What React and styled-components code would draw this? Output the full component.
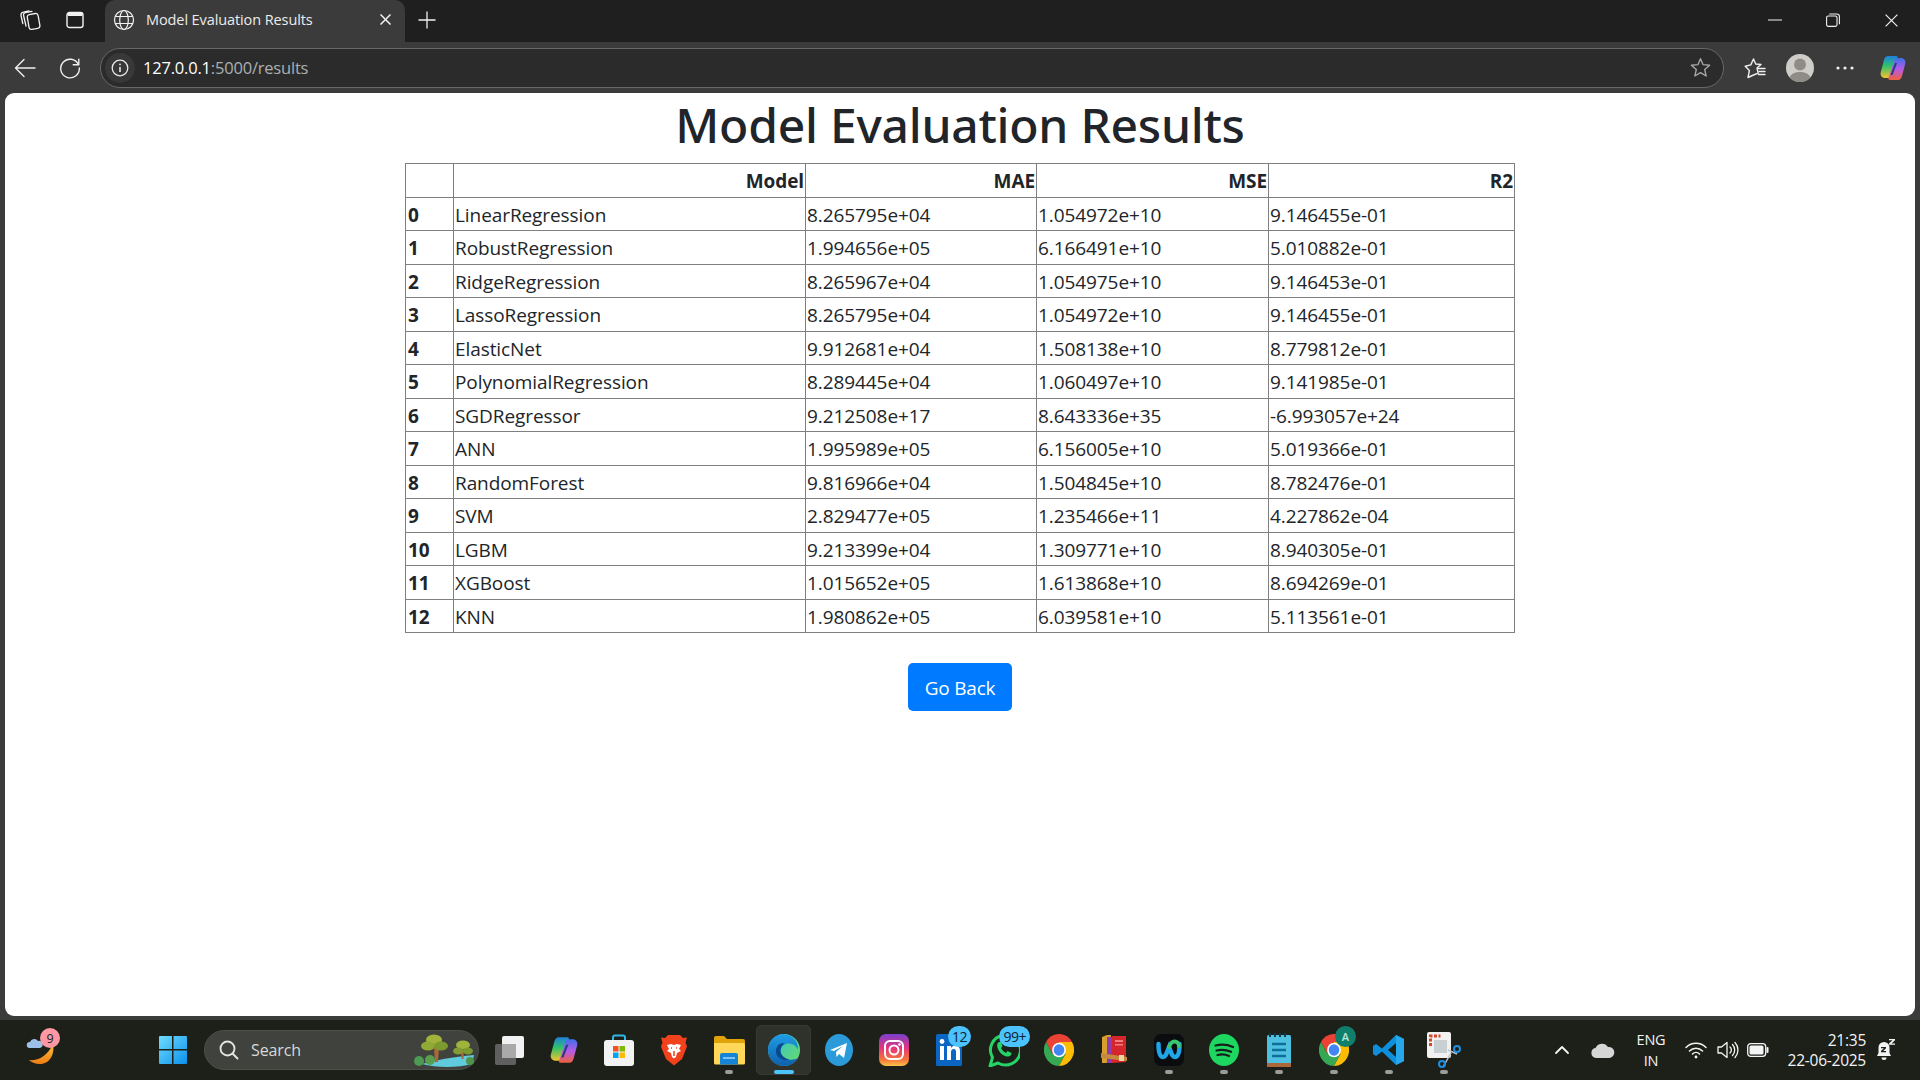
import React from 'react'
import styled, { createGlobalStyle } from 'styled-components'

const UI_FONT = '"Open Sans", "Noto Sans", sans-serif'

const GlobalStyle = createGlobalStyle`
  html, body {
    margin: 0;
    padding: 0;
    background: #3b3b3b;
    overflow: hidden;
  }
  * { box-sizing: border-box; }
`

const results = [
  ['LinearRegression', '8.265795e+04', '1.054972e+10', '9.146455e-01'],
  ['RobustRegression', '1.994656e+05', '6.166491e+10', '5.010882e-01'],
  ['RidgeRegression', '8.265967e+04', '1.054975e+10', '9.146453e-01'],
  ['LassoRegression', '8.265795e+04', '1.054972e+10', '9.146455e-01'],
  ['ElasticNet', '9.912681e+04', '1.508138e+10', '8.779812e-01'],
  ['PolynomialRegression', '8.289445e+04', '1.060497e+10', '9.141985e-01'],
  ['SGDRegressor', '9.212508e+17', '8.643336e+35', '-6.993057e+24'],
  ['ANN', '1.995989e+05', '6.156005e+10', '5.019366e-01'],
  ['RandomForest', '9.816966e+04', '1.504845e+10', '8.782476e-01'],
  ['SVM', '2.829477e+05', '1.235466e+11', '4.227862e-04'],
  ['LGBM', '9.213399e+04', '1.309771e+10', '8.940305e-01'],
  ['XGBoost', '1.015652e+05', '1.613868e+10', '8.694269e-01'],
  ['KNN', '1.980862e+05', '6.039581e+10', '5.113561e-01'],
]

const Frame = styled.div`
  width: 1920px;
  height: 1080px;
  display: flex;
  flex-direction: column;
  font-family: ${UI_FONT};
`

const TabBar = styled.div`
  height: 42px;
  flex: none;
  background: #1f1f1f;
  display: flex;
  align-items: stretch;
  color: #f2f2f2;
`

const TabBarButton = styled.div`
  width: ${p => p.$w}px;
  display: flex;
  align-items: center;
  justify-content: center;
  padding-bottom: 2px;
`

const Tab = styled.div`
  width: 300px;
  background: #3b3b3b;
  border-radius: 10px 10px 0 0;
  display: flex;
  align-items: center;
  padding: 0 14px 3px 8px;
  margin-left: 15px;
`

const TabTitle = styled.div`
  font-size: 14.5px;
  margin-left: 11px;
  flex: 1;
  color: #ececec;
  letter-spacing: -0.1px;
`

const WindowControls = styled.div`
  margin-left: auto;
  display: flex;
`

const WindowButton = styled.div`
  width: 58px;
  display: flex;
  justify-content: center;
  align-items: center;
  height: 40px;
`

const Toolbar = styled.div`
  height: 51px;
  flex: none;
  background: #3b3b3b;
  display: flex;
  align-items: center;
  color: #efefef;
`

const NavButton = styled.div`
  width: ${p => p.$w || 45}px;
  display: flex;
  justify-content: center;
  align-items: center;
`

const AddressBar = styled.div`
  width: 1624px;
  height: 40px;
  margin-left: 10px;
  border: 1px solid #686868;
  border-radius: 20px;
  background: #2b2b2b;
  display: flex;
  align-items: center;
  padding: 0 12px 0 4px;
`

const InfoBadge = styled.div`
  width: 30px;
  height: 30px;
  border-radius: 50%;
  background: #383838;
  display: flex;
  align-items: center;
  justify-content: center;
`

const Url = styled.div`
  margin-left: 8px;
  flex: 1;
  font-size: 16.5px;
  color: #a9b0b3;
  letter-spacing: -0.2px;
  span { color: #fff; }
`

const ToolbarEnd = styled.div`
  display: flex;
  align-items: center;
  margin-left: 8px;
`

const PageWrap = styled.div`
  flex: 1;
  min-height: 0;
  padding: 0 5px 4px;
`

const Page = styled.main`
  height: 100%;
  background: #fff;
  border-radius: 9px;
  display: flex;
  flex-direction: column;
  align-items: center;
`

const Heading = styled.h1`
  margin: 0;
  height: 70px;
  font-family: "Noto Sans", "Open Sans", sans-serif;
  font-size: 48px;
  line-height: 64px;
  font-weight: 500;
  color: #212529;
  letter-spacing: -0.25px;
`

const Table = styled.table`
  width: 1109px;
  border-collapse: collapse;
  table-layout: fixed;
  font-size: 19px;
  color: #212529;
  letter-spacing: -0.08px;
  th, td {
    border: 1px solid #808080;
    padding: 2px 1px 0 1px;
    height: 33.5px;
    line-height: 24px;
  }
`

const HeadCell = styled.th`
  width: ${p => p.$w}px;
  text-align: right;
  font-weight: 700;
`

const IndexCell = styled.th`
  text-align: left;
  font-weight: 700;
  padding-left: 2px !important;
`

const BackButton = styled.a`
  margin-top: 30px;
  width: 104px;
  height: 48px;
  padding-top: 2px;
  background: #007bff;
  border-radius: 5px;
  color: #fff;
  font-size: 19px;
  letter-spacing: -0.2px;
  display: flex;
  align-items: center;
  justify-content: center;
  text-decoration: none;
`

const Taskbar = styled.footer`
  height: 60px;
  flex: none;
  background: #1c2019;
  display: flex;
  align-items: center;
  color: #f4f4f4;
  position: relative;
`

const WeatherSlot = styled.div`
  width: 145px;
  padding: 0 0 0 26px;
  position: relative;
  display: flex;
  align-items: center;
  height: 60px;
`

const WeatherBadge = styled.div`
  position: absolute;
  left: 40px;
  top: 8px;
  width: 20px;
  height: 20px;
  border-radius: 50%;
  background: #ff98a4;
  color: #1b1b1b;
  font-size: 12.5px;
  display: flex;
  align-items: center;
  justify-content: center;
`

const Slot = styled.div`
  width: 55px;
  height: 50px;
  flex: none;
  position: relative;
  display: flex;
  align-items: center;
  justify-content: center;
  border-radius: 5px;
  background: ${p => (p.$active ? '#2e322b' : 'transparent')};
  border: 1px solid ${p => (p.$active ? '#363a33' : 'transparent')};
`

const RunDot = styled.div`
  position: absolute;
  bottom: 0;
  left: 50%;
  transform: translateX(-50%);
  width: ${p => (p.$active ? 20 : 8)}px;
  height: 4px;
  border-radius: 2px;
  background: ${p => (p.$active ? '#4cc2ff' : '#9b9b9b')};
`

const CountBadge = styled.div`
  position: absolute;
  top: 0;
  right: ${p => p.$right}px;
  height: 21px;
  min-width: 22px;
  padding: 0 4px;
  border-radius: 11px;
  background: #4cc2ff;
  color: #10222c;
  font-size: 14px;
  letter-spacing: -0.5px;
  display: flex;
  align-items: center;
  justify-content: center;
`

const SearchPill = styled.div`
  width: 275px;
  height: 40px;
  margin: 0 2px 0 4px;
  flex: none;
  border-radius: 20px;
  background: #3f423d;
  border: 1px solid #4b4e49;
  display: flex;
  align-items: center;
  padding-left: 14px;
  position: relative;
  font-size: 16px;
  color: #d8d8d8;
`

const SearchLabel = styled.span`
  margin-left: 12px;
  letter-spacing: -0.1px;
`

const SearchArt = styled.div`
  position: absolute;
  right: 2px;
  top: 3px;
`

const Tray = styled.div`
  margin-left: auto;
  display: flex;
  align-items: center;
  padding-right: 16px;
`

const TrayItem = styled.div`
  width: ${p => p.$w}px;
  display: flex;
  align-items: center;
  justify-content: center;
`

const LangBlock = styled.div`
  width: 54px;
  font-size: 14.5px;
  line-height: 21px;
  text-align: center;
  letter-spacing: -0.2px;
`

const Clock = styled.div`
  width: 95px;
  padding-right: 2px;
  font-size: 15.5px;
  line-height: 20px;
  text-align: right;
  letter-spacing: -0.25px;
  white-space: nowrap;
`

const stroke = { fill: 'none', stroke: 'currentColor', strokeLinecap: 'round', strokeLinejoin: 'round' }

const WorkspacesIcon = () => (
  <svg width="22" height="22" viewBox="0 0 22 22" {...stroke} strokeWidth="1.3">
    <rect x="9" y="5" width="11" height="15" rx="2.5" transform="rotate(-10 14 12)" />
    <path d="M7 17 4.6 6.5A2.3 2.3 0 0 1 6.4 3.7l6.6-1.3" />
    <path d="M10 2 4.5 3.2A3 3 0 0 0 2 6.5l1.8 8" />
  </svg>
)

const TabListIcon = () => (
  <svg width="18" height="18" viewBox="0 0 18 18" fill="none" stroke="currentColor" strokeWidth="1.4">
    <rect x="1" y="1.5" width="16" height="15" rx="2.5" />
    <path d="M2 2.5h14v2H2z" fill="currentColor" strokeWidth="1" />
  </svg>
)

const GlobeIcon = () => (
  <svg width="22" height="22" viewBox="0 0 22 22" fill="none" stroke="currentColor" strokeWidth="1.2">
    <circle cx="11" cy="11" r="9.5" />
    <ellipse cx="11" cy="11" rx="4.3" ry="9.5" />
    <path d="M2.2 7.5h17.6M2.2 14.5h17.6" />
  </svg>
)

const CrossIcon = ({ size = 11, w = 1.5 }) => (
  <svg width={size} height={size} viewBox="0 0 11 11" stroke="currentColor" strokeWidth={w}>
    <path d="M.5.5l10 10M10.5.5l-10 10" />
  </svg>
)

const PlusIcon = () => (
  <svg width="18" height="18" viewBox="0 0 18 18" stroke="currentColor" strokeWidth="1.3">
    <path d="M9 .5v17M.5 9h17" />
  </svg>
)

const MinimizeIcon = () => (
  <svg width="14" height="2" viewBox="0 0 14 2" stroke="currentColor"><path d="M0 1h14" /></svg>
)

const RestoreIcon = () => (
  <svg width="14" height="14" viewBox="0 0 14 14" fill="none" stroke="currentColor" strokeWidth="1.1">
    <rect x=".6" y="3" width="10.4" height="10.4" rx="1.6" />
    <path d="M3.2 1h7.6a2.6 2.6 0 0 1 2.6 2.6v7.6" />
  </svg>
)

const BackIcon = () => (
  <svg width="22" height="20" viewBox="0 0 22 20" {...stroke} strokeWidth="1.4">
    <path d="M21 10H1.5M10 1.5 1.5 10l8.5 8.5" />
  </svg>
)

const ReloadIcon = () => (
  <svg width="22" height="22" viewBox="0 0 22 22" {...stroke} strokeWidth="1.4">
    <path d="M19.4 7.5A9.3 9.3 0 1 0 20.3 11" />
    <path d="M19.8 2.2v5.6h-5.6" />
  </svg>
)

const InfoIcon = () => (
  <svg width="18" height="18" viewBox="0 0 18 18" fill="none" stroke="#e8e8e8" strokeWidth="1.3">
    <circle cx="9" cy="9" r="7.8" />
    <path d="M9 8v5" strokeWidth="1.6" />
    <circle cx="9" cy="5.4" r=".9" fill="#e8e8e8" stroke="none" />
  </svg>
)

const StarPath = 'M10 1.6l2.5 5.7 6.2.6-4.7 4.1 1.4 6.1L10 14.9l-5.4 3.2 1.4-6.1-4.7-4.1 6.2-.6z'

const StarIcon = () => (
  <svg width="21" height="21" viewBox="0 0 20 20" fill="none" stroke="#a8a8a8" strokeWidth="1.3" strokeLinejoin="round">
    <path d={StarPath} />
  </svg>
)

const FavouritesIcon = () => (
  <svg width="22" height="22" viewBox="0 0 22 22" {...stroke} strokeWidth="1.4">
    <path d="M9.5 2l2.2 5 5.3.5-4 3.5 1.2 5.2L9.5 18 4 20.5l1.4-7L1.2 9.3l5.6-1.4z" />
    <path d="M14 11.5h7M15 14.5h6M14.5 17.5h6.5" />
  </svg>
)

const AvatarIcon = () => (
  <svg width="28" height="28" viewBox="0 0 28 28">
    <circle cx="14" cy="14" r="14" fill="#cfcdc9" />
    <circle cx="14" cy="10.5" r="6" fill="#8f8b87" />
    <path d="M3.6 23.4C5.5 19.5 9 18 14 18s8.5 1.5 10.4 5.4A14 14 0 0 1 14 28 14 14 0 0 1 3.6 23.4z" fill="#8f8b87" />
  </svg>
)

const DotsIcon = () => (
  <svg width="18" height="4" viewBox="0 0 18 4" fill="currentColor">
    <circle cx="2" cy="2" r="1.6" /><circle cx="9" cy="2" r="1.6" /><circle cx="16" cy="2" r="1.6" />
  </svg>
)

const CopilotIcon = ({ id, size = 28 }) => (
  <svg width={size} height={size} viewBox="0 0 28 28">
    <defs>
      <linearGradient id={`${id}a`} x1="0" y1="0" x2="0" y2="1">
        <stop offset="0" stopColor="#1f7fe0" /><stop offset=".45" stopColor="#2fc36a" /><stop offset="1" stopColor="#f7c22e" />
      </linearGradient>
      <linearGradient id={`${id}b`} x1="0" y1="0" x2="0" y2="1">
        <stop offset="0" stopColor="#3f6fe8" /><stop offset=".5" stopColor="#b45be8" /><stop offset="1" stopColor="#f2603c" />
      </linearGradient>
    </defs>
    <path d="M9 2h8c1.500 0 2 1 1.400 2.500L13 21c-.8 2.400-2 3-4 3H6c-3 0-5-2.500-4.300-5.500L5 6C5.700 3.500 7 2 9 2z" fill={`url(#${id}a)`} />
    <path d="M19 26h-8c-1.500 0-2-1-1.400-2.500L15 7c.8-2.400 2-3 4-3h3c3 0 5 2.500 4.300 5.500L23 22c-.7 2.500-2 4-4 4z" fill={`url(#${id}b)`} />
    <path d="M16 9l-4.500 12h2L18 9z" fill="#12306f" opacity=".85" />
  </svg>
)

const WeatherIcon = () => (
  <svg width="30" height="30" viewBox="0 0 30 30">
    <defs>
      <linearGradient id="moon" x1="0" y1="0" x2="0" y2="1">
        <stop offset="0" stopColor="#ffc23d" /><stop offset="1" stopColor="#f07c12" />
      </linearGradient>
    </defs>
    <path d="M27 9c2 10-3 20-13 20-5 0-9-2-11-4 8 1 18-3 24-16z" fill="url(#moon)" />
    <path d="M3.500 13a3 3 0 0 1 .5-6 4.500 4.500 0 0 1 8-1 3.500 3.500 0 0 1 2 7z" fill="#9cc0ea" />
  </svg>
)

const StartIcon = () => (
  <svg width="30" height="30" viewBox="0 0 30 30">
    <defs>
      <linearGradient id="win" x1="0" y1="0" x2="1" y2="1">
        <stop offset="0" stopColor="#6fdcff" /><stop offset="1" stopColor="#0b90ea" />
      </linearGradient>
    </defs>
    <path fill="url(#win)" d="M1 2a1 1 0 0 1 1-1h12v13H1zM15.500 1H28a1 1 0 0 1 1 1v12H15.500zM1 15.500h13V29H2a1 1 0 0 1-1-1zM15.500 15.500H29V28a1 1 0 0 1-1 1H15.500z" />
  </svg>
)

const SearchIcon = () => (
  <svg width="20" height="20" viewBox="0 0 20 20" {...stroke} strokeWidth="1.900" color="#e3e3e3">
    <circle cx="8.500" cy="8.500" r="7" />
    <path d="M13.500 13.500 18.500 18.500" />
  </svg>
)

const LandscapeArt = () => (
  <svg width="62" height="34" viewBox="0 0 62 34">
    <path d="M8 30c14-4 30-7 52-9l-2 9c-14 4-36 4-50 0z" fill="#5fcbdc" />
    <path d="M20 14l1 14h3l1-14zM47 16l.5 9h2l.5-9z" fill="#a86a3a" />
    <circle cx="5" cy="27" r="5" fill="#4c9a53" />
    <ellipse cx="20" cy="6" rx="8" ry="5.500" fill="#a1b33a" />
    <ellipse cx="14" cy="12" rx="7" ry="4.500" fill="#90a834" />
    <ellipse cx="27" cy="12" rx="7" ry="4.500" fill="#7c9a30" />
    <circle cx="16" cy="26" r="5" fill="#5a9e4f" />
    <ellipse cx="49" cy="11" rx="7" ry="4.500" fill="#a0b33b" />
    <ellipse cx="44" cy="17" rx="5" ry="3.500" fill="#829c33" />
    <ellipse cx="54" cy="17" rx="5" ry="3.500" fill="#7c9a30" />
    <circle cx="56" cy="27" r="4" fill="#4f934d" />
  </svg>
)

const TaskViewIcon = () => (
  <svg width="30" height="30" viewBox="0 0 30 30">
    <rect x="1" y="9" width="21" height="21" rx="2" fill="#5f5f5f" />
    <rect x="8" y="1" width="22" height="22" rx="2" fill="#f1f1f1" />
    <rect x="8" y="9" width="14" height="14" fill="#a9a9a9" />
  </svg>
)

const StoreIcon = () => (
  <svg width="30" height="32" viewBox="0 0 30 32">
    <path d="M9 7V3.500A2 2 0 0 1 11 1.500h8a2 2 0 0 1 2 2V7" fill="none" stroke="#2fb7e8" strokeWidth="2" />
    <rect y="6" width="30" height="26" rx="3" fill="#f2f2f2" />
    <path d="M9 12h5.500v5.500H9z" fill="#f25022" />
    <path d="M15.500 12H21v5.500h-5.500z" fill="#7fba00" />
    <path d="M9 18.500h5.500V24H9z" fill="#00a4ef" />
    <path d="M15.500 18.500H21V24h-5.500z" fill="#ffb900" />
  </svg>
)

const BraveIcon = () => (
  <svg width="28" height="32" viewBox="0 0 28 32">
    <path d="M8 1h12l3 3 4-.5-1.500 5 1.500 4-5 12.500-8 6.500-8-6.500L1 12.500l1.500-4L1 3.500 5 4z" fill="#f1421d" />
    <path d="M7 11l4-1 3 1 3-1 4 1-2 4 2 2-4 2-1 4-2 1.500-2-1.500-1-4-4-2 2-2z" fill="#fff" />
    <path d="M14 17v5M11 14h1M16 14h1" stroke="#f1421d" strokeWidth="1.500" />
  </svg>
)

const FolderIcon = () => (
  <svg width="32" height="30" viewBox="0 0 32 30">
    <path d="M1 3a2 2 0 0 1 2-2h8l3 3h16a2 2 0 0 1 2 2v4H1z" fill="#e0a30c" />
    <path d="M1 8h29a2 2 0 0 1 2 2v18a1.500 1.500 0 0 1-1.500 1.500H2.500A1.500 1.500 0 0 1 1 28z" fill="#ffd85a" />
    <path d="M7 20a2 2 0 0 1 2-2h14a2 2 0 0 1 2 2v9.500H7z" fill="#1583d6" />
    <path d="M10 23h12" stroke="#9fd8ff" strokeWidth="1.500" />
  </svg>
)

const EdgeIcon = () => (
  <svg width="32" height="32" viewBox="0 0 32 32">
    <defs>
      <linearGradient id="edgeA" x1="0" y1="0" x2="1" y2="1">
        <stop offset="0" stopColor="#2fc0e0" /><stop offset="1" stopColor="#6bdc63" />
      </linearGradient>
      <linearGradient id="edgeB" x1="0" y1="0" x2="0" y2="1">
        <stop offset="0" stopColor="#1f9ee6" /><stop offset="1" stopColor="#0f5fad" />
      </linearGradient>
    </defs>
    <circle cx="16" cy="16" r="16" fill="url(#edgeA)" />
    <path d="M16 0C7 0 0 7 0 16c0 9 7 16 16 16 6 0 11-3 14-8-3 1.500-6 2-9 1.500-6-1-10-6-8-11 1-3 4-5 8-5 4 0 7 2 9 6 0-9-6-15-14-15z" fill="url(#edgeB)" />
    <path d="M13 14c-2 5 2 10 8 11.500-5 2-12-1-13-7-.6-4 1.500-8 5-9 1.500-.5 2.500-.5 3.500 0-1.500 1-3 2.500-3.500 4.500z" fill="#0b4a8f" />
  </svg>
)

const TelegramIcon = () => (
  <svg width="28" height="32" viewBox="0 0 28 32">
    <ellipse cx="14" cy="16" rx="14" ry="16" fill="#2a9bd8" />
    <path d="M5 16l17-7-3 15-5-4-2.500 3-.5-5 7-6-9 5z" fill="#fff" />
  </svg>
)

const InstagramIcon = () => (
  <svg width="30" height="32" viewBox="0 0 30 32">
    <defs>
      <linearGradient id="insta" x1="0" y1="0" x2="0" y2="1">
        <stop offset="0" stopColor="#7a3fd0" /><stop offset=".45" stopColor="#e6357a" /><stop offset=".8" stopColor="#f6763a" /><stop offset="1" stopColor="#fcc24a" />
      </linearGradient>
    </defs>
    <rect width="30" height="32" rx="7" fill="url(#insta)" />
    <rect x="6" y="7" width="18" height="18" rx="5" fill="none" stroke="#fff" strokeWidth="2" />
    <circle cx="15" cy="16" r="4.500" fill="none" stroke="#fff" strokeWidth="2" />
    <circle cx="20.500" cy="10.500" r="1.300" fill="#fff" />
  </svg>
)

const LinkedInIcon = () => (
  <svg width="26" height="32" viewBox="0 0 26 32">
    <rect width="26" height="32" rx="1.500" fill="#0a66c2" />
    <path d="M4 12h4v14H4zM11 12h4v2c1-1.500 2.500-2.500 4.500-2.500 3 0 4.500 2 4.500 5.500v9h-4v-8c0-2-.6-3-2.200-3S15 16 15 18v8h-4z" fill="#fff" />
    <circle cx="6" cy="7.500" r="2.400" fill="#fff" />
  </svg>
)

const WhatsAppIcon = () => (
  <svg width="32" height="34" viewBox="0 0 32 34">
    <path d="M2 33l2.500-8.500A15 15 0 1 1 10 30z" fill="none" stroke="#25d366" strokeWidth="3" strokeLinejoin="round" />
    <path d="M11 9c-2 1-2.500 4-.5 8 2.500 4.500 6.500 7 10 6.500 2-.3 3-2 3-3.500l-4-2-1.500 2c-2-1-4-3-5-5l1.500-1.500-1.500-4.500z" fill="#25d366" />
  </svg>
)

const ChromeIcon = () => (
  <svg width="30" height="32" viewBox="0 0 48 48" preserveAspectRatio="none">
    <path d="M24 24 44.800 12A24 24 0 0 0 3.200 12l10.400 18z" fill="#ea4335" />
    <path d="M24 24 13.600 30 3.200 12A24 24 0 0 0 24 48l10.400-18z" fill="#34a853" />
    <path d="M24 24l10.400 6L24 48A24 24 0 0 0 44.800 12H24z" fill="#fbbc05" />
    <circle cx="24" cy="24" r="11" fill="#fff" />
    <circle cx="24" cy="24" r="8.500" fill="#4285f4" />
  </svg>
)

const WinRarIcon = () => (
  <svg width="26" height="32" viewBox="0 0 26 32">
    <path d="M1 3l5-2h4v26l-5 2H1z" fill="#d8a02a" />
    <path d="M6 3h6v26H6z" fill="#8d3bb0" />
    <path d="M11 2h14v26l-14 1z" fill="#d4262b" />
    <path d="M14 6h8v2h-8zM14 10h8v1.500h-8z" fill="#f08080" />
    <path d="M0 19l26 4v4L0 24z" fill="#c48a3f" />
    <rect x="18" y="21" width="5" height="6" fill="#e8d7a0" />
  </svg>
)

const WebexIcon = () => (
  <svg width="30" height="32" viewBox="0 0 30 32">
    <rect width="30" height="32" rx="7" fill="#0b0c0f" />
    <path d="M4.500 10c0 9 1.500 13 4.500 13s3.500-4 6-10c2.500 6 3 10 6 10s4.500-4 4.500-13" fill="none" stroke="#1fa5e8" strokeWidth="4.500" strokeLinecap="round" />
    <path d="M15 13c1.500-4 3-5.500 5.500-5.500S25 9 25 12" fill="none" stroke="#3ac56f" strokeWidth="4" strokeLinecap="round" />
  </svg>
)

const SpotifyIcon = () => (
  <svg width="30" height="32" viewBox="0 0 30 32">
    <ellipse cx="15" cy="16" rx="15" ry="16" fill="#1ed760" />
    <path d="M6.500 11.500c6-1.500 12-1 17.500 1.500M7.500 16.500c5-1.200 10-.8 14.500 1.300M8.500 21c4-1 8-.6 11.500 1" fill="none" stroke="#16201a" strokeWidth="2.300" strokeLinecap="round" />
  </svg>
)

const NotepadIcon = () => (
  <svg width="24" height="34" viewBox="0 0 24 34">
    <rect y="2" width="24" height="30" rx="1.500" fill="#4fc0e0" />
    <path d="M0 30h24v4H0z" fill="#a8683a" />
    <path d="M3 0v4M8 0v4M13 0v4M18 0v4" stroke="#14384a" strokeWidth="2" />
    <path d="M5 11h14M5 17h14M5 23h14" stroke="#0e6f99" strokeWidth="2.500" />
  </svg>
)

const VsCodeIcon = () => (
  <svg width="32" height="32" viewBox="0 0 32 32">
    <path d="M23 1l8 4v22l-8 4-14-13.500L3 22l-3-2v-8l3-2 6 4.500zM23 9l-8 7 8 7z" fill="#0e8fdc" />
    <path d="M23 1l8 4v22l-8 4z" fill="#26a7ec" />
  </svg>
)

const SnipIcon = () => (
  <svg width="34" height="36" viewBox="0 0 34 36">
    <rect width="24" height="26" rx="2" fill="#f1f1f1" />
    <path d="M3.500 14V4h10" fill="none" stroke="#d4472a" strokeWidth="3" strokeDasharray="3 1.500" />
    <path d="M7 8h13v13H7z" fill="#c9d0d4" />
    <path d="M16 35l8-14M30 22l-9-4" stroke="#bfc6c9" strokeWidth="1.500" />
    <circle cx="15" cy="32" r="3" fill="none" stroke="#1f8fe0" strokeWidth="2" />
    <circle cx="30" cy="17" r="3" fill="none" stroke="#1f8fe0" strokeWidth="2" />
  </svg>
)

const ChromeProfile = styled.div`
  position: absolute;
  top: 0;
  right: 4px;
  width: 21px;
  height: 21px;
  border-radius: 50%;
  background: #0f7f6c;
  color: #bde6dc;
  font-size: 11px;
  font-weight: 600;
  display: flex;
  align-items: center;
  justify-content: center;
`

const ChevronIcon = () => (
  <svg width="16" height="10" viewBox="0 0 16 10" {...stroke} strokeWidth="1.800"><path d="M2 8l6-6 6 6" /></svg>
)

const CloudIcon = () => (
  <svg width="24" height="16" viewBox="0 0 24 16">
    <path d="M5 16a5 5 0 0 1-.5-9.900A7 7 0 0 1 17 5a5.500 5.500 0 0 1 1.500 11z" fill="#d6d6d6" />
  </svg>
)

const WifiIcon = () => (
  <svg width="22" height="18" viewBox="0 0 22 18" {...stroke} strokeWidth="1.500">
    <path d="M1 6.500a14 14 0 0 1 20 0M4.500 10a9 9 0 0 1 13 0M7.500 13a5 5 0 0 1 7 0" />
    <circle cx="11" cy="16" r="1.400" fill="currentColor" stroke="none" />
  </svg>
)

const VolumeIcon = () => (
  <svg width="22" height="20" viewBox="0 0 22 20" {...stroke} strokeWidth="1.300">
    <path d="M1 7h3.500L10 2.500v15L4.500 13H1z" />
    <path d="M13 7a4 4 0 0 1 0 6M15.500 4.500a8 8 0 0 1 0 11M18 2.500a11 11 0 0 1 0 15" />
  </svg>
)

const BatteryIcon = () => (
  <svg width="22" height="14" viewBox="0 0 22 14" fill="none" stroke="currentColor" strokeWidth="1.300">
    <rect x=".7" y=".7" width="18" height="12.600" rx="3" />
    <rect x="2.500" y="2.500" width="14" height="9" rx="1.500" fill="currentColor" stroke="none" />
    <path d="M20.500 5v4" strokeWidth="2" strokeLinecap="round" />
  </svg>
)

const BellIcon = () => (
  <svg width="20" height="22" viewBox="0 0 20 22" fill="currentColor">
    <path d="M8 3a5.500 5.500 0 0 0-5.500 5.500V14L1 17h14l-1.500-3V8.500A5.500 5.500 0 0 0 8 3z" />
    <path d="M5.500 18.500h5a2.500 2.500 0 0 1-5 0z" />
    <path d="M5 8h5v1.300L7.200 12H10v1.300H5V12l2.800-2.700H5z" fill="#1c2019" />
    <path d="M13 0h6v1.300L15.500 4.500H19v1.300h-6V4.500l3.500-3.200H13z" />
  </svg>
)

const taskIcons = [
  { key: 'taskview', icon: <TaskViewIcon /> },
  { key: 'copilot', icon: <CopilotIcon id="taskCopilot" size={30} /> },
  { key: 'store', icon: <StoreIcon /> },
  { key: 'brave', icon: <BraveIcon /> },
  { key: 'files', icon: <FolderIcon />, running: true },
  { key: 'edge', icon: <EdgeIcon />, running: true, active: true },
  { key: 'telegram', icon: <TelegramIcon /> },
  { key: 'instagram', icon: <InstagramIcon /> },
  { key: 'linkedin', icon: <LinkedInIcon />, count: '12', right: 4 },
  { key: 'whatsapp', icon: <WhatsAppIcon />, count: '99+', right: 0 },
  { key: 'chrome', icon: <ChromeIcon /> },
  { key: 'winrar', icon: <WinRarIcon /> },
  { key: 'webex', icon: <WebexIcon />, running: true },
  { key: 'spotify', icon: <SpotifyIcon />, running: true },
  { key: 'notepad', icon: <NotepadIcon />, running: true },
  { key: 'chromeProfile', icon: <ChromeIcon />, running: true, profile: true },
  { key: 'vscode', icon: <VsCodeIcon />, running: true },
  { key: 'snip', icon: <SnipIcon />, running: true },
]

const columns = [
  { label: '', width: 48 },
  { label: 'Model', width: 352 },
  { label: 'MAE', width: 231 },
  { label: 'MSE', width: 232 },
  { label: 'R2', width: 246 },
]

export default function App() {
  return (
    <Frame>
      <GlobalStyle />
      <TabBar>
        <TabBarButton $w={60}><WorkspacesIcon /></TabBarButton>
        <TabBarButton $w={30}><TabListIcon /></TabBarButton>
        <Tab>
          <GlobeIcon />
          <TabTitle>Model Evaluation Results</TabTitle>
          <CrossIcon />
        </Tab>
        <TabBarButton $w={44}><PlusIcon /></TabBarButton>
        <WindowControls>
          <WindowButton><MinimizeIcon /></WindowButton>
          <WindowButton><RestoreIcon /></WindowButton>
          <WindowButton><CrossIcon size={13} w={1} /></WindowButton>
        </WindowControls>
      </TabBar>

      <Toolbar>
        <NavButton $w={50}><BackIcon /></NavButton>
        <NavButton $w={40}><ReloadIcon /></NavButton>
        <AddressBar>
          <InfoBadge><InfoIcon /></InfoBadge>
          <Url><span>127.0.0.1</span>:5000/results</Url>
          <StarIcon />
        </AddressBar>
        <ToolbarEnd>
          <NavButton $w={46}><FavouritesIcon /></NavButton>
          <NavButton $w={44}><AvatarIcon /></NavButton>
          <NavButton $w={46}><DotsIcon /></NavButton>
          <NavButton $w={50}><CopilotIcon id="barCopilot" /></NavButton>
        </ToolbarEnd>
      </Toolbar>

      <PageWrap>
        <Page>
          <Heading>Model Evaluation Results</Heading>
          <Table>
            <thead>
              <tr>
                {columns.map(col => (
                  <HeadCell key={col.label || 'index'} $w={col.width}>{col.label}</HeadCell>
                ))}
              </tr>
            </thead>
            <tbody>
              {results.map((row, i) => (
                <tr key={row[0]}>
                  <IndexCell>{i}</IndexCell>
                  {row.map(value => <td key={value}>{value}</td>)}
                </tr>
              ))}
            </tbody>
          </Table>
          <BackButton href="#">Go Back</BackButton>
        </Page>
      </PageWrap>

      <Taskbar>
        <WeatherSlot>
          <WeatherIcon />
          <WeatherBadge>9</WeatherBadge>
        </WeatherSlot>
        <Slot><StartIcon /></Slot>
        <SearchPill>
          <SearchIcon />
          <SearchLabel>Search</SearchLabel>
          <SearchArt><LandscapeArt /></SearchArt>
        </SearchPill>
        {taskIcons.map(item => (
          <Slot key={item.key} $active={item.active}>
            {item.icon}
            {item.count && <CountBadge $right={item.right}>{item.count}</CountBadge>}
            {item.profile && <ChromeProfile>A</ChromeProfile>}
            {item.running && <RunDot $active={item.active} />}
          </Slot>
        ))}
        <Tray>
          <TrayItem $w={40}><ChevronIcon /></TrayItem>
          <TrayItem $w={42}><CloudIcon /></TrayItem>
          <LangBlock>ENG<br />IN</LangBlock>
          <TrayItem $w={35}><WifiIcon /></TrayItem>
          <TrayItem $w={30}><VolumeIcon /></TrayItem>
          <TrayItem $w={30}><BatteryIcon /></TrayItem>
          <Clock>21:35<br />22-06-2025</Clock>
          <TrayItem $w={36}><BellIcon /></TrayItem>
        </Tray>
      </Taskbar>
    </Frame>
  )
}
